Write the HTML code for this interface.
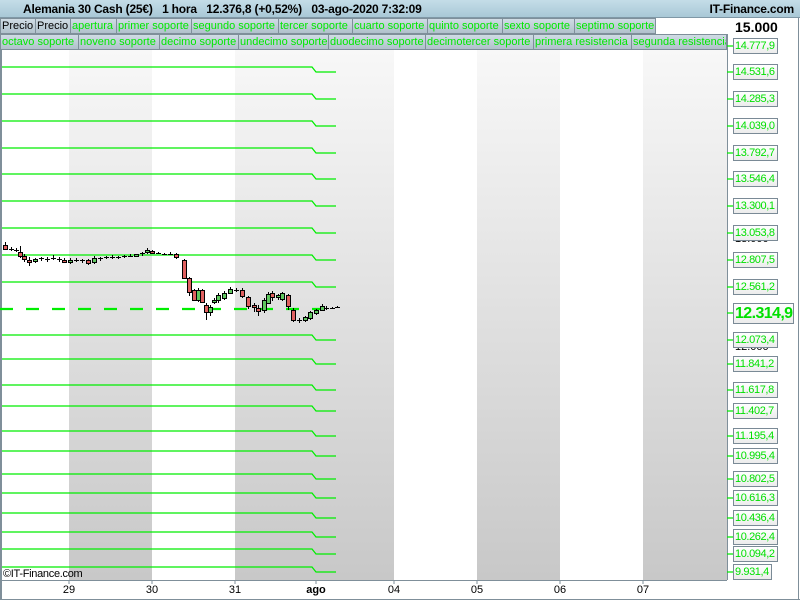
<!DOCTYPE html>
<html><head><meta charset="utf-8"><style>
*{margin:0;padding:0;box-sizing:border-box}
body{width:800px;height:600px;overflow:hidden;background:#fff;font-family:"Liberation Sans",sans-serif;position:relative}
#hdr{position:absolute;left:0;top:0;width:800px;height:18px;background:linear-gradient(#c4dde8,#a9c8d6);border-bottom:1px solid #7f98a6}
#hdr .t{position:absolute;left:23px;top:2px;font-size:12px;color:#000;white-space:pre;font-weight:bold;letter-spacing:-0.2px}
#hdr .r{position:absolute;right:6px;top:2px;font-size:12px;font-weight:bold;letter-spacing:-0.2px}
.row{position:absolute;left:0;height:16px;background:linear-gradient(#d2dee6,#aebfca)}
.c{position:absolute;top:0;height:16px;border:1px solid #7f8f9a;font-size:11px;line-height:14px;color:#00e800;padding-left:1px;white-space:nowrap;overflow:hidden}
.c.k{color:#000}
.lbl{position:absolute;left:733px;width:45px;height:16px;border:1px solid #7a8a96;background:linear-gradient(#fff,#ececec);font-size:11px;color:#00e000;line-height:14px;padding-left:1px;letter-spacing:-0.4px;white-space:nowrap;overflow:hidden}
.bx{position:absolute;top:584px;font-size:11px;color:#000;transform:translateX(-50%)}
</style></head><body>
<svg style="position:absolute;left:0;top:0" width="800" height="600">
<defs><linearGradient id="g" x1="0" y1="0" x2="0" y2="1"><stop offset="0" stop-color="#f8f8f8"/><stop offset="1" stop-color="#c8c8c8"/></linearGradient></defs>
<rect x="69" y="48" width="83" height="532" fill="url(#g)"/>
<rect x="235" y="48" width="159" height="532" fill="url(#g)"/>
<rect x="477" y="48" width="83" height="532" fill="url(#g)"/>
<rect x="643" y="48" width="84" height="532" fill="url(#g)"/>
<rect x="0" y="48" width="2" height="552" fill="#7f8f9a"/>
<line x1="0" y1="580.5" x2="727" y2="580.5" stroke="#7f8f9a"/>
<line x1="727.5" y1="34" x2="727.5" y2="580" stroke="#7f8f9a"/>
<line x1="0" y1="599.5" x2="800" y2="599.5" stroke="#7f8f9a"/>
<line x1="798.5" y1="18" x2="798.5" y2="600" stroke="#7f8f9a"/>
<g stroke="#00ee00" stroke-width="1.3" fill="none">
<path d="M2 67H312l4 5h20M2 94H312l4 5h20M2 121H312l4 5h20M2 148H312l4 5h20M2 174H312l4 5h20M2 201H312l4 5h20M2 228H312l4 5h20M2 255H312l4 5h20M2 282H312l4 5h20M2 335H312l4 5h20M2 359H312l4 5h20M2 385H312l4 5h20M2 406H312l4 5h20M2 431H312l4 5h20M2 451H312l4 5h20M2 474H312l4 5h20M2 493H312l4 5h20M2 513H312l4 5h20M2 532H312l4 5h20M2 549H312l4 5h20M2 567H312l4 5h20"/>
<path d="M0 309H338" stroke-width="2.2" stroke-dasharray="13 13"/>
<path d="M727 46h6M727 72h6M727 99h6M727 126h6M727 153h6M727 179h6M727 206h6M727 233h6M727 260h6M727 287h6M727 313h6M727 340h6M727 364h6M727 390h6M727 411h6M727 436h6M727 456h6M727 479h6M727 498h6M727 518h6M727 537h6M727 554h6M727 572h6"/>
</g>
<g stroke="#000" stroke-width="1" id="cd"></g>
<g stroke="#7f8f9a"><path d="M69 580v4M152 580v4M235 580v4M316 580v4M394 580v4M477 580v4M560 580v4M643 580v4"/></g>
<rect x="2.5" y="8.5" width="5" height="7" fill="#e05050" stroke="#333"/><line x1="5" y1="6" x2="5" y2="18" stroke="#333"/>
<rect x="9.5" y="4.5" width="5" height="10" fill="#50d050" stroke="#333"/><line x1="12" y1="1" x2="12" y2="17" stroke="#333"/>
</svg>
<div id="hdr"><span class="t">Alemania 30 Cash (25€)   1 hora   12.376,8 (+0,52%)   03-ago-2020 7:32:09</span><span class="r">IT-Finance.com</span></div>
<div class="row" style="top:18px;width:656px">
<div class="c k" style="left:0;width:36px">Precio</div><div class="c k" style="left:35px;width:36px">Precio</div><div class="c" style="left:70px;width:47px">apertura</div><div class="c" style="left:116px;width:76px">primer soporte</div><div class="c" style="left:191px;width:88px">segundo soporte</div><div class="c" style="left:278px;width:75px">tercer soporte</div><div class="c" style="left:352px;width:76px">cuarto soporte</div><div class="c" style="left:427px;width:76px">quinto soporte</div><div class="c" style="left:502px;width:73px">sexto soporte</div><div class="c" style="left:574px;width:82px">septimo soporte</div></div>
<div class="row" style="top:34px;width:727px">
<div class="c" style="left:0;width:79px">octavo soporte</div><div class="c" style="left:78px;width:82px">noveno soporte</div><div class="c" style="left:159px;width:80px">decimo soporte</div><div class="c" style="left:238px;width:91px">undecimo soporte</div><div class="c" style="left:328px;width:98px">duodecimo soporte</div><div class="c" style="left:425px;width:109px">decimotercer soporte</div><div class="c" style="left:533px;width:99px">primera resistencia</div><div class="c" style="left:631px;width:96px">segunda resistencia</div></div>
<div style="position:absolute;left:735px;top:19px;font-size:14px;font-weight:bold">15.000</div>
<div style="position:absolute;left:735px;top:233px;font-size:11px;color:#000">13.000</div>
<div style="position:absolute;left:735px;top:341px;font-size:11px;color:#000">12.000</div>
<div class="lbl" style="top:38px">14.777,9</div><div class="lbl" style="top:64px">14.531,6</div><div class="lbl" style="top:91px">14.285,3</div><div class="lbl" style="top:118px">14.039,0</div><div class="lbl" style="top:145px">13.792,7</div><div class="lbl" style="top:171px">13.546,4</div><div class="lbl" style="top:198px">13.300,1</div><div class="lbl" style="top:225px">13.053,8</div><div class="lbl" style="top:252px">12.807,5</div><div class="lbl" style="top:279px">12.561,2</div>
<div class="lbl" style="top:303px;width:61px;height:21px;font-size:16px;font-weight:bold;line-height:19px;letter-spacing:-0.6px">12.314,9</div>
<div class="lbl" style="top:332px">12.073,4</div><div class="lbl" style="top:356px">11.841,2</div><div class="lbl" style="top:382px">11.617,8</div><div class="lbl" style="top:403px">11.402,7</div><div class="lbl" style="top:428px">11.195,4</div><div class="lbl" style="top:448px">10.995,4</div><div class="lbl" style="top:471px">10.802,5</div><div class="lbl" style="top:490px">10.616,3</div><div class="lbl" style="top:510px">10.436,4</div><div class="lbl" style="top:529px">10.262,4</div><div class="lbl" style="top:546px">10.094,2</div><div class="lbl" style="top:564px;width:39px">9.931,4</div>
<div style="position:absolute;left:3px;top:568px;font-size:11px;letter-spacing:-0.3px">©IT-Finance.com</div>
<div class="bx" style="left:69px">29</div><div class="bx" style="left:152px">30</div><div class="bx" style="left:235px">31</div><div class="bx" style="left:316px;font-weight:bold">ago</div><div class="bx" style="left:394px">04</div><div class="bx" style="left:477px">05</div><div class="bx" style="left:560px">06</div><div class="bx" style="left:643px">07</div>
<script>
var d=[[5,245,249,242,250],[11,249,250,247,251],[16,250,251,248,252],[20,252,256,246,258],[24,256,259,254,262],[29,260,262,257,266],[35,261,259,258,263],[41,259,258,257,261],[47,259,260,257,262],[53,258,258,255,260],[59,260,259,257,262],[64,260,262,258,263],[70,262,260,258,264],[76,260,261,258,262],[82,260,261,259,263],[88,260,263,259,265],[94,262,258,256,264],[100,259,258,257,261],[106,258,257,256,259],[112,257,258,255,259],[118,257,258,256,259],[124,257,256,255,258],[130,256,256,254,257],[136,256,254,254,257],[142,254,253,252,256],[147,252,250,248,254],[152,251,253,250,254],[158,253,253,252,254],[164,254,254,253,255],[170,254,254,252,255],[176,254,257,253,259],[184,260,278,259,279],[189,278,292,277,296],[194,290,300,289,301],[198,300,290,288,302],[202,290,302,289,303],[206,305,312,303,320],[210,312,307,305,316],[214,302,300,298,304],[218,300,295,293,303],[224,298,293,291,300],[230,293,289,287,293],[236,290,290,288,292],[242,290,296,288,298],[248,297,306,296,309],[254,305,307,303,312],[258,308,311,305,316],[264,310,300,298,313],[268,303,294,292,304],[272,293,297,291,301],[278,297,295,294,300],[282,299,293,292,301],[288,295,306,294,310],[293,310,320,308,322],[299,320,321,318,323],[305,320,317,316,322],[310,318,312,311,320],[316,313,310,309,315],[322,310,306,304,311],[326,308,308,306,310],[332,308,308,307,309],[337,307,307,306,308]];
var g=document.getElementById('cd'),s='';
d.forEach(function(c){var x=c[0],t=Math.min(c[1],c[2]),h=Math.abs(c[2]-c[1]);
s+='<line x1="'+(x+.5)+'" y1="'+c[3]+'" x2="'+(x+.5)+'" y2="'+c[4]+'"/>';
if(h<1.5)s+='<line x1="'+(x-2)+'" y1="'+(t+.5)+'" x2="'+(x+3)+'" y2="'+(t+.5)+'"/>';
else s+='<rect x="'+(x-1.5)+'" y="'+(t+.5)+'" width="4" height="'+h+'" fill="'+(c[2]>c[1]?'#e06060':'#60c860')+'"/>';});
g.innerHTML=s;
</script>
</body></html>
